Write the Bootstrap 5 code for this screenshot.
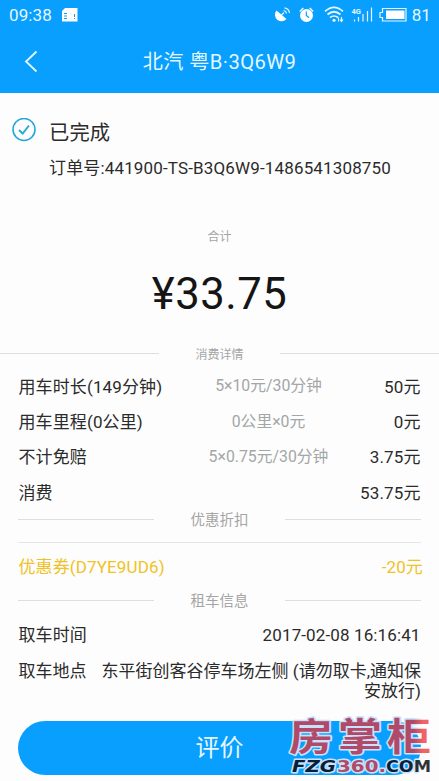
<!DOCTYPE html>
<html lang="zh-CN">
<head>
<meta charset="utf-8">
<meta name="viewport" content="width=device-width, initial-scale=1">
<title>订单详情</title>
<link href="https://cdn.jsdelivr.net/npm/bootstrap@5.3.0/dist/css/bootstrap.min.css" rel="stylesheet">
<style>
body{font-family:Roboto,"Noto Sans CJK SC",sans-serif;font-size:17px;line-height:1.2;letter-spacing:.12px;color:#2b2b2b;background:#fdfdfd;overflow:hidden}
.screen{width:439px;height:781px;overflow:hidden}
.topbar{height:93px;background:#089ffe;color:#e6f7ff}
.status{height:31px;padding:0 8px 0 9px;font-size:17px;letter-spacing:.1px}
.titlebar{height:62px}
.titlebar h1{font-size:20.2px;font-weight:400;letter-spacing:.4px}
.back{left:24px;top:19px}
.done{height:120px;padding:25px 0 0 12px}
.done h2{font-size:20.3px;font-weight:400;line-height:28px;padding-top:1px}
.done-text{padding-left:13px}
.order{font-size:17px;line-height:24px;margin-top:9px;letter-spacing:.15px}
.sum{height:130px}
.tiny{font-size:12px;line-height:18px;color:#a5a5a5}
.sum .tiny{padding-top:15px}
.total{font-size:43.6px;line-height:54px;color:#151515;letter-spacing:.5px;padding-top:22px}
.sep{font-size:14.5px;letter-spacing:0;color:#a5a5a5;line-height:20px;height:20px;flex-shrink:0}
.sep i{height:1px;background:#dedede;margin-top:-2px}
.sep.wide{font-size:12px;height:21px;margin-top:1px;margin-bottom:4px}
.sep.wide i{width:159px}
.sep.inset{padding:0 18px}
.sep.inset i{width:136px}
.line{height:35.4px;padding:0 18.500px 0 18.500px;display:grid;grid-template-columns:170px 160px 1fr;align-items:center;flex-shrink:0}
.line > :last-child{text-align:right}
.rate{color:#a3a6a6;font-size:15.8px;letter-spacing:0;text-align:center}
.line.when{grid-template-columns:1fr auto;margin-top:6px}
.coupon{height:49px;margin:0 16px 0 18.500px;color:#f0c225;flex-shrink:0}
.rule{height:1px;background:#e6e6e6;margin:11px 18px 0;flex-shrink:0}
.place{padding:8px 18px 0 18.500px;line-height:20px;height:60px;letter-spacing:0}
.rate-btn{height:54px;margin:0 18px 6px;background:#089ffe;color:#e6f7ff;font-size:24px;line-height:1}
.stamp{left:280px;top:690px;pointer-events:none}
</style>
</head>
<body>
<div class="screen position-relative d-flex flex-column">
  <header class="topbar flex-shrink-0">
    <div class="status d-flex align-items-center justify-content-between">
      <div class="d-flex align-items-center">
        <span>09:38</span>
        <svg class="ms-2" width="18" height="14" viewBox="0 0 18 14"><path d="M5 0h12.500v13.500H2V3z" fill="#fff"/><path d="M4 5.500h3M4 8h3M4 10.500h3M14.500 6v3M14.500 10v1" stroke="#089ffe" stroke-width="1"/></svg>
      </div>
      <div class="d-flex align-items-center">
        <svg width="138" height="20" viewBox="274 6 138 20" fill="none" stroke="#e6f7ff" stroke-width="1.200">
          <path d="M276.500 11.500a6.200 6.200 0 1 0 10 8.500z" fill="#fff" stroke="none"/><path d="M281 16.500l3-3M283.500 11.500a3.500 3.500 0 0 1 3 3M284.500 8.800a6 6 0 0 1 5 5.200"/>
          <circle cx="306.500" cy="16.500" r="6.500" fill="#fff" stroke="none"/><path d="M299.800 12.500l3.500-3.500M309.700 9l3.500 3.500" stroke-width="1.600"/><path d="M306.300 12.500v4l2.800 2.300" stroke="#089ffe"/>
          <path d="M325 12.300q9-8 18 0M327.500 15.500q6.500-5.500 13 0M330 18.500q4-3 8 0" stroke-width="1.700"/><circle cx="334" cy="21.200" r="1.500" fill="#fff" stroke="none"/><path d="M338.500 22.500v-4M341.500 18v4M340 20.500l1.500 2 1.500-2"/>
          <path d="M354.500 20.500v2M358.500 18v4.500M363 15v7.500M367.500 12v10.500M371.500 8.500v14"/>
          <text x="351.500" y="14.500" font-size="7.500" font-weight="700" letter-spacing="0" fill="#e6f7ff" stroke="none">4G</text>
          <path d="M382.500 9.500H406v12.500h-23.500v-3.500H380v-5h2.500z"/><path d="M386 11.500h18.500v8.500H386z" fill="#fff" stroke="none"/>
        </svg>
        <span>81</span>
      </div>
    </div>
    <div class="titlebar position-relative d-flex align-items-center justify-content-center">
      <svg class="back position-absolute" width="16" height="24" viewBox="0 0 16 24" fill="none" stroke="#e6f7ff" stroke-width="1.800"><path d="M12.500 1.500L2 11.500l10.500 10"/></svg>
      <h1 class="m-0">北汽 粤B·3Q6W9</h1>
    </div>
  </header>

  <section class="done d-flex flex-shrink-0">
    <svg class="flex-shrink-0" width="24" height="24" viewBox="0 0 24 24" fill="none" stroke="#25a9d6"><circle cx="12" cy="11.500" r="11" stroke-width="1.600"/><path d="M7 12l3.700 3.500L17 7.500" stroke-width="1.900"/></svg>
    <div class="done-text">
      <h2 class="m-0">已完成</h2>
      <div class="order">订单号:441900-TS-B3Q6W9-1486541308750</div>
    </div>
  </section>

  <section class="sum text-center flex-shrink-0">
    <div class="tiny">合计</div>
    <div class="total">¥33.75</div>
  </section>

  <div class="sep wide d-flex justify-content-between align-items-center"><i></i><span>消费详情</span><i></i></div>
  <div class="line"><span>用车时长(149分钟)</span><span class="rate">5×10元/30分钟</span><span>50元</span></div>
  <div class="line"><span>用车里程(0公里)</span><span class="rate">0公里×0元</span><span>0元</span></div>
  <div class="line"><span>不计免赔</span><span class="rate">5×0.75元/30分钟</span><span>3.75元</span></div>
  <div class="line"><span>消费</span><span></span><span>53.75元</span></div>
  <div class="sep inset d-flex justify-content-between align-items-center"><i></i><span>优惠折扣</span><i></i></div>
  <div class="rule"></div>
  <div class="coupon d-flex justify-content-between align-items-center"><span>优惠券(D7YE9UD6)</span><span>-20元</span></div>
  <div class="sep inset d-flex justify-content-between align-items-center"><i></i><span>租车信息</span><i></i></div>
  <div class="line when"><span>取车时间</span><span>2017-02-08 16:16:41</span></div>
  <div class="place d-flex"><span class="flex-shrink-0">取车地点</span><span class="text-end">东平街创客谷停车场左侧 (请勿取卡,通知保安放行)</span></div>
  <button class="rate-btn btn rounded-pill border-0 p-0 mt-auto flex-shrink-0">评价</button>

  <svg class="stamp position-absolute" width="159" height="91" viewBox="280 690 159 91">
    <defs>
      <linearGradient id="red" gradientUnits="userSpaceOnUse" x1="280" x2="439" y1="0" y2="0"><stop offset=".84" stop-color="#b04a68"/><stop offset=".9" stop-color="#f06464"/></linearGradient>
      <linearGradient id="halo" gradientUnits="userSpaceOnUse" x1="280" x2="439" y1="0" y2="0"><stop offset=".84" stop-color="#c9e2fb"/><stop offset=".9" stop-color="#fdfdfd"/></linearGradient>
      <linearGradient id="ink" gradientUnits="userSpaceOnUse" x1="280" x2="439" y1="0" y2="0"><stop offset=".8" stop-color="#06203c"/><stop offset=".88" stop-color="#303234"/></linearGradient>
    </defs>
    <g transform="translate(0 749.500) scale(1 .86)" font-family="'Noto Sans CJK SC',sans-serif" font-weight="700" font-size="44" letter-spacing="0" stroke="url(#halo)" stroke-width="3.500" stroke-linejoin="round" paint-order="stroke" fill="url(#red)"><text x="289" y="0">房</text><text x="338" y="0">掌</text><text x="387" y="0">柜</text></g>
    <g font-family="'DejaVu Sans',sans-serif" font-weight="700" font-size="16.500" letter-spacing="0" stroke="url(#halo)" stroke-width="3" stroke-linejoin="round" paint-order="stroke"><text x="292" y="772" textLength="44" lengthAdjust="spacingAndGlyphs" font-style="italic" fill="#06203c">FZG</text><text x="337" y="772" textLength="49" lengthAdjust="spacingAndGlyphs" fill="#b04a68">360.</text><text x="386" y="772" textLength="45" lengthAdjust="spacingAndGlyphs" fill="url(#ink)">COM</text></g>
  </svg>
</div>
<script src="https://cdn.jsdelivr.net/npm/bootstrap@5.3.0/dist/js/bootstrap.bundle.min.js"></script>
</body>
</html>
